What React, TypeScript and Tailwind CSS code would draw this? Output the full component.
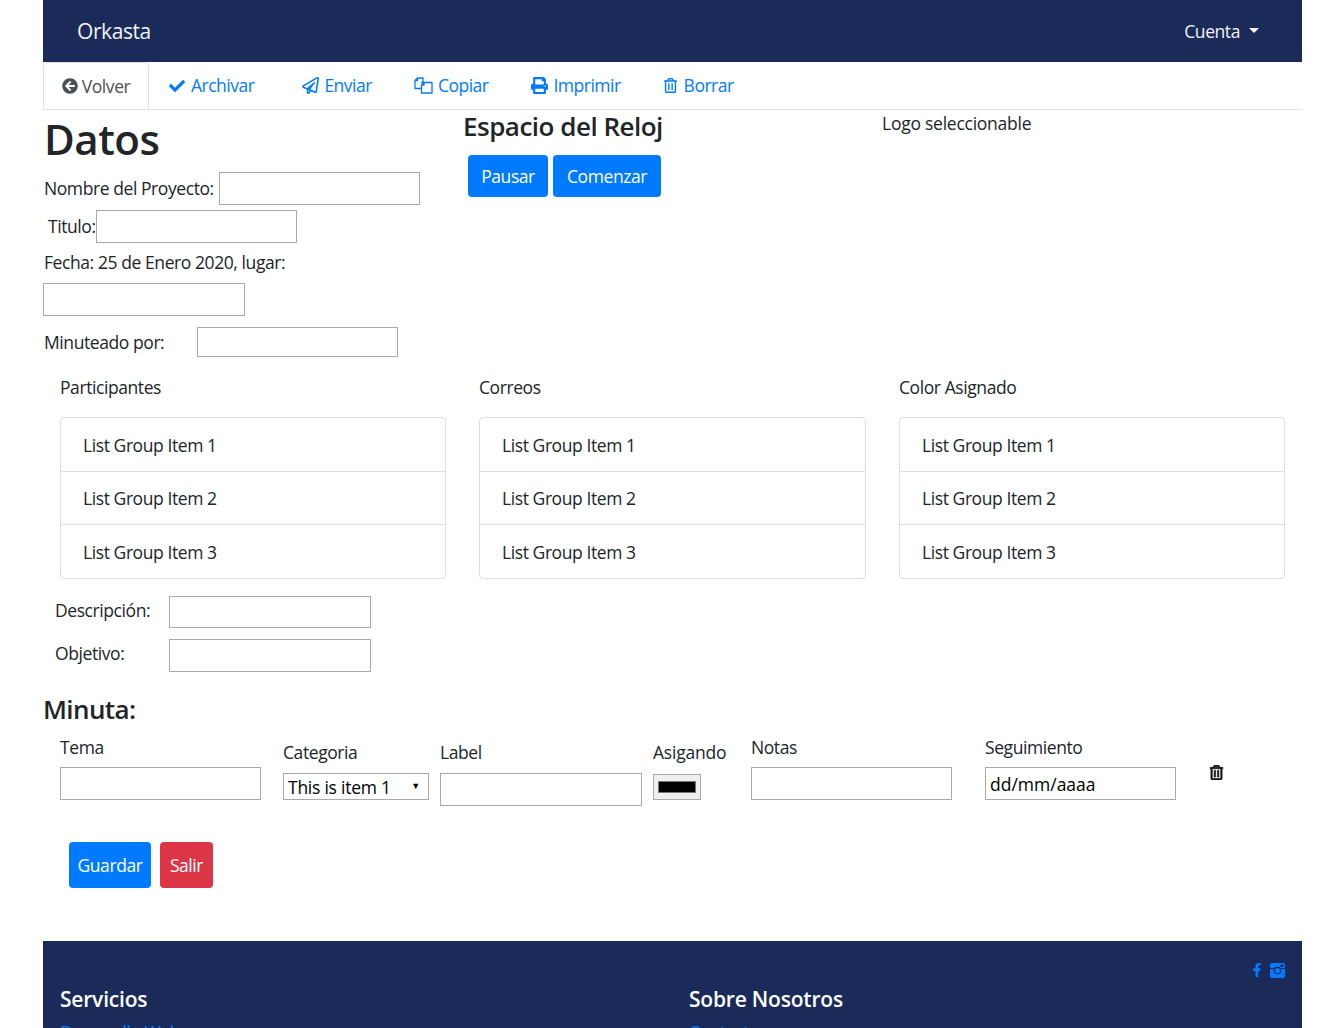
import React from "react";
import {
  FaArrowCircleLeft,
  FaCheck,
  FaRegPaperPlane,
  FaPrint,
  FaRegTrashAlt,
  FaFacebookF,
} from "react-icons/fa";

const FilesIcon = () => (
  <svg width="19" height="17" viewBox="0 0 19 17" fill="none" stroke="currentColor" strokeWidth="1.3" strokeLinejoin="round">
    <path d="M7.5 11.5H1V3.5L3.5 1H9V5" />
    <path d="M1 3.5H3.5V1" />
    <path d="M7.5 5.5H13L18 5.5V16H7.5V8L10 5.5Z" />
    <path d="M7.5 8H10V5.5" />
  </svg>
);

const InstaIcon = () => (
  <svg width="15" height="15" viewBox="0 0 15 15">
    <rect x="0" y="0" width="15" height="15" rx="2" fill="currentColor" />
    <path d="M0 5.5H4M11 5.5H15" stroke="#1a2b59" strokeWidth="1" />
    <circle cx="7.5" cy="7.5" r="3.2" fill="none" stroke="#1a2b59" strokeWidth="1.2" />
    <rect x="10.5" y="1.5" width="3" height="2.5" fill="#1a2b59" />
  </svg>
);

const tabs = [
  { label: "Archivar", icon: <FaCheck size={16} />, cls: "ml-[20px] gap-[6px]" },
  { label: "Enviar", icon: <FaRegPaperPlane size={17} />, cls: "ml-[48px] gap-[5px]" },
  { label: "Copiar", icon: <FilesIcon />, cls: "ml-[42px] gap-[5px]" },
  { label: "Imprimir", icon: <FaPrint size={17} />, cls: "ml-[43px] gap-[5px]" },
  { label: "Borrar", icon: <FaRegTrashAlt size={15} />, cls: "ml-[42px] gap-[6px]" },
];

const inputCls = "border border-[#a9a9a9] bg-white block";

const ListGroup = ({ title, width }: { title: string; width: string }) => (
  <div className={width}>
    <p className="h-[42px] leading-[24px]">{title}</p>
    <ul className="border border-[#dfdfdf] rounded-[4px]">
      <li className="h-[54px] pl-[22px] pt-[1px] flex items-center border-b border-[#dfdfdf]">List Group Item 1</li>
      <li className="h-[53px] pl-[22px] pt-[1px] flex items-center border-b border-[#dfdfdf]">List Group Item 2</li>
      <li className="h-[53px] pl-[22px] pt-[1px] flex items-center">List Group Item 3</li>
    </ul>
  </div>
);

const App = () => {
  return (
    <div
      className="h-[1028px] overflow-hidden bg-white pl-[43px] pr-[36px] text-[17.5px] text-[#212529]"
      style={{ fontFamily: '"Open Sans", sans-serif', letterSpacing: "-0.42px" }}
    >
      {/* Navbar */}
      <nav className="h-[62px] bg-[#1a2b59] flex items-center justify-between pl-[34px] pr-[43px] text-white">
        <span className="text-[21px] text-[#f2f2f2] pt-[1px]">Orkasta</span>
        <span className="flex items-center gap-[9px] text-[#f2f2f2]">
          Cuenta
          <span className="w-0 h-0 border-x-[5px] border-x-transparent border-t-[5px] border-t-white mb-[2px]"></span>
        </span>
      </nav>

      {/* Tabs */}
      <div className="h-[48px] flex items-center border-b border-[#dee2e6] text-[#007bff]">
        <div className="h-[48px] w-[106px] mt-[1px] pb-[1px] border border-b-0 border-[#dee2e6] rounded-t-[4px] flex items-center justify-center gap-[4px] text-[#495057]">
          <FaArrowCircleLeft size={16} />
          Volver
        </div>
        {tabs.map((t) => (
          <div key={t.label} className={`flex items-center tracking-[-0.5px] ${t.cls}`}>
            {t.icon}
            {t.label}
          </div>
        ))}
      </div>

      {/* Datos + Reloj + Logo */}
      <div className="flex h-[259px]">
        <div className="w-[420px]">
          <h1 className="text-[42px] font-semibold leading-[58px] mb-[4px] pl-[1px] tracking-[-0.5px]">Datos</h1>
          <div className="flex items-center gap-[5px] pl-[1px] h-[33px]">
            <span>Nombre del Proyecto:</span>
            <span className={`${inputCls} h-[33px] w-[201px]`}></span>
          </div>
          <div className="flex items-center pl-[5px] h-[33px] mt-[5px]">
            <span className="w-[48px]">Titulo:</span>
            <span className={`${inputCls} h-[33px] w-[201px]`}></span>
          </div>
          <p className="leading-[24px] mt-[7px] pl-[1px]">Fecha: 25 de Enero 2020, lugar:</p>
          <span className={`${inputCls} h-[33px] w-[202px] mt-[9px]`}></span>
          <div className="flex items-center mt-[11px] h-[30px] pl-[1px]">
            <span className="w-[153px]">Minuteado por:</span>
            <span className={`${inputCls} h-[30px] w-[201px]`}></span>
          </div>
        </div>
        <div className="w-[419px]">
          <h2 className="text-[26px] font-semibold leading-[32px] tracking-[-0.5px]">Espacio del Reloj</h2>
          <div className="flex gap-[5px] mt-[13px] ml-[5px]">
            <button className="h-[42px] w-[80px] bg-[#007bff] text-white rounded-[4px]">Pausar</button>
            <button className="h-[42px] w-[108px] bg-[#007bff] text-white rounded-[4px]">Comenzar</button>
          </div>
        </div>
        <div className="pt-[1px] leading-[24px] tracking-[-0.25px]">Logo seleccionable</div>
      </div>

      {/* Listas */}
      <div className="flex gap-[33px] pl-[17px] mt-[6px]">
        <ListGroup title="Participantes" width="w-[386px]" />
        <ListGroup title="Correos" width="w-[387px]" />
        <ListGroup title="Color Asignado" width="w-[386px]" />
      </div>

      {/* Descripcion */}
      <div className="flex items-start mt-[17px] pl-[12px] h-[33px]">
        <span className="w-[114px] leading-[28px]">Descripción:</span>
        <span className={`${inputCls} h-[32px] w-[202px]`}></span>
      </div>
      <div className="flex items-start mt-[10px] pl-[12px] h-[33px]">
        <span className="w-[114px] leading-[28px]">Objetivo:</span>
        <span className={`${inputCls} h-[33px] w-[202px]`}></span>
      </div>

      <h3 className="text-[26px] font-semibold leading-[34px] mt-[20px] tracking-[-0.6px]">Minuta:</h3>

      {/* Fila de minuta */}
      <div className="flex items-start mt-[9px] h-[108px] pl-[17px]">
        <div className="w-[223px]">
          <p className="leading-[24px]">Tema</p>
          <span className={`${inputCls} h-[33px] w-[201px] mt-[8px]`}></span>
        </div>
        <div className="w-[157px]">
          <p className="leading-[24px] mt-[5px]">Categoria</p>
          <div className="relative mt-[9px] w-[146px] h-[27px] border border-[#a9a9a9] pl-[4px] leading-[27px] text-black tracking-[-0.25px]">
            This is item 1
            <span className="absolute right-[8px] top-[6px] text-[9px] leading-[12px]">▼</span>
          </div>
        </div>
        <div className="w-[213px]">
          <p className="leading-[24px] mt-[5px]">Label</p>
          <span className={`${inputCls} h-[33px] w-[202px] mt-[9px]`}></span>
        </div>
        <div className="w-[98px]">
          <p className="leading-[24px] mt-[5px] tracking-[-0.2px]">Asigando</p>
          <div className="mt-[10px] w-[48px] h-[26px] border border-[#a9a9a9] bg-[#efefef] flex items-center justify-center">
            <span className="block w-[38px] h-[12px] bg-black border border-[#777]"></span>
          </div>
        </div>
        <div className="w-[234px]">
          <p className="leading-[24px]">Notas</p>
          <span className={`${inputCls} h-[33px] w-[201px] mt-[8px]`}></span>
        </div>
        <div className="w-[224px]">
          <p className="leading-[24px]">Seguimiento</p>
          <span className={`${inputCls} h-[33px] w-[191px] mt-[8px] pl-[4px] leading-[33px] text-black tracking-normal`}>dd/mm/aaaa</span>
        </div>
        <FaRegTrashAlt size={15} className="mt-[30px] text-[#111] stroke-[20px]" />
      </div>

      {/* Acciones */}
      <div className="flex gap-[9px] ml-[26px] mt-[-1px]">
        <button className="h-[46px] w-[82px] bg-[#007bff] text-white rounded-[4px]">Guardar</button>
        <button className="h-[46px] w-[53px] bg-[#dc3545] text-white rounded-[4px]">Salir</button>
      </div>

      {/* Footer */}
      <footer className="mt-[53px] bg-[#1a2b59] h-[200px] text-white pl-[17px]">
        <div className="flex justify-end gap-[6px] pt-[22px] pr-[17px] text-[#007bff] h-[44px]">
          <FaFacebookF size={14} />
          <InstaIcon />
        </div>
        <div className="flex">
          <div className="w-[629px]">
            <h5 className="text-[21px] font-semibold leading-[28px] tracking-[-0.2px]">Servicios</h5>
            <p className="text-[#007bff] mt-[6px]">Desarrollo Web</p>
          </div>
          <div>
            <h5 className="text-[21px] font-semibold leading-[28px] tracking-[-0.2px]">Sobre Nosotros</h5>
            <p className="text-[#007bff] mt-[6px]">Contacto</p>
          </div>
        </div>
      </footer>
    </div>
  );
};

export default App;
